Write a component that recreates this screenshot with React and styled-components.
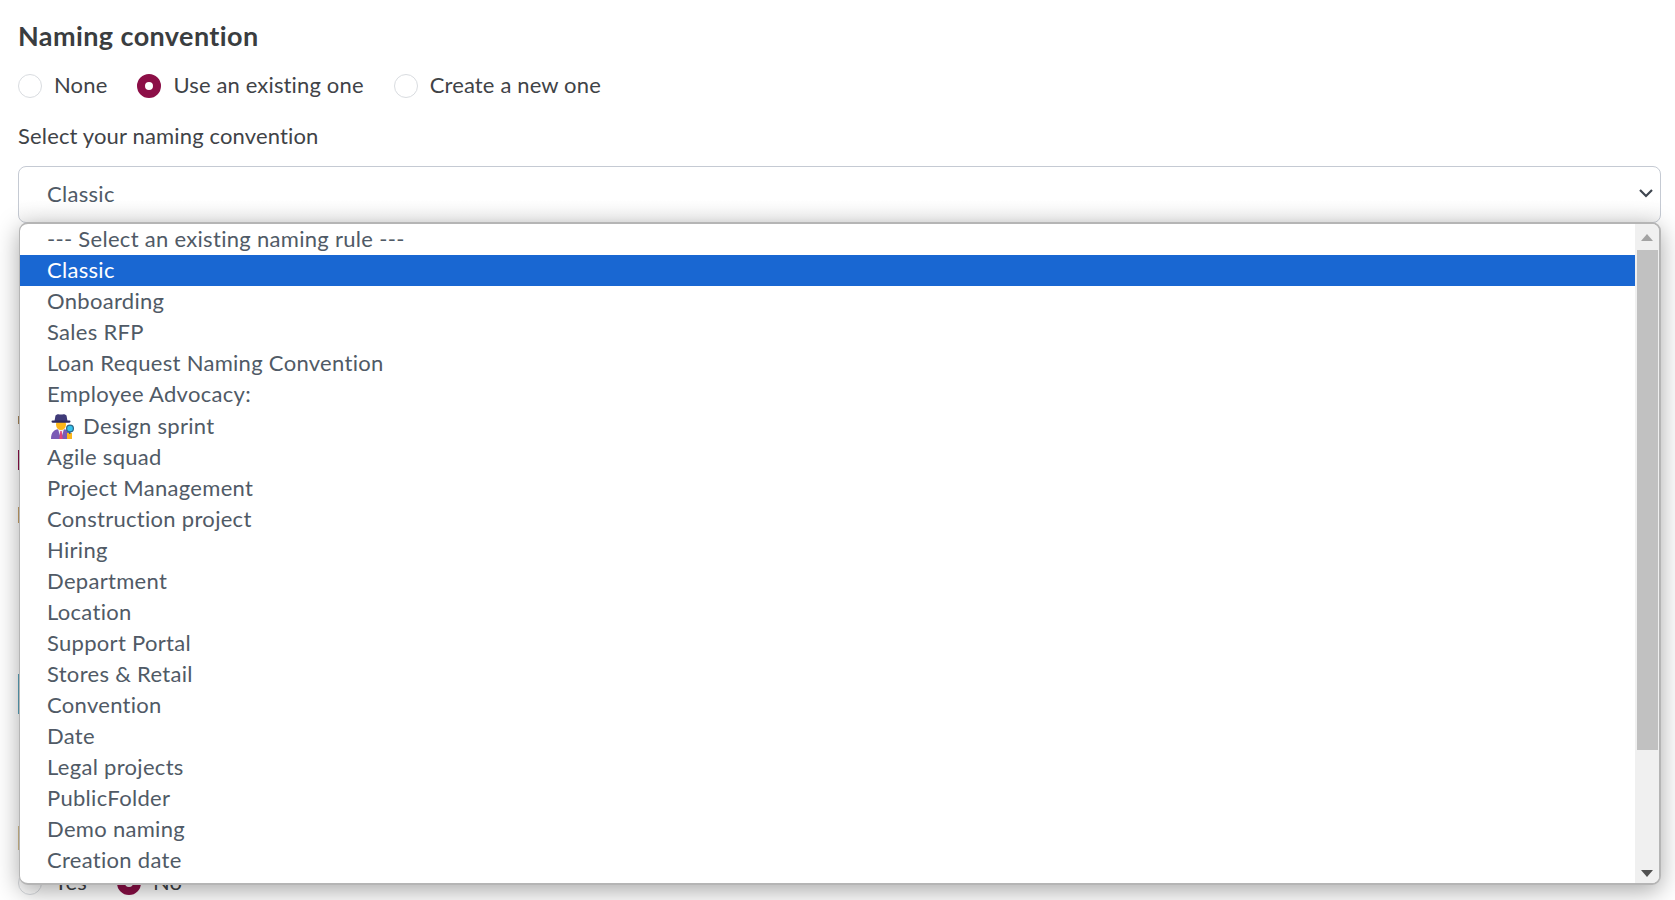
import React from "react";
import styled, { createGlobalStyle } from "styled-components";

const GlobalStyle = createGlobalStyle`
    html, body {
        margin: 0;
        padding: 0;
        background: #fff;
        overflow: hidden;
    }
    body {
        font-family: "Lato", "Noto Sans", sans-serif;
        color: #3f4347;
    }
`;

const OPTIONS = [
    "--- Select an existing naming rule ---",
    "Classic",
    "Onboarding",
    "Sales RFP",
    "Loan Request Naming Convention",
    "Employee Advocacy:",
    "Design sprint",
    "Agile squad",
    "Project Management",
    "Construction project",
    "Hiring",
    "Department",
    "Location",
    "Support Portal",
    "Stores & Retail",
    "Convention",
    "Date",
    "Legal projects",
    "PublicFolder",
    "Demo naming",
    "Creation date",
];

// bits of the form under the open list, only their left edge shows
const HIDDEN_MARKS = [
    { top: 193, height: 8, color: "#a8875a" },
    { top: 26, height: 20, color: "#8c0f47" },
    { top: 37, height: 16, color: "#c9a36a" },
    { top: 151, height: 40, color: "#5ba5bd" },
    { top: 112, height: 24, color: "#d6bf8e" },
];

const Page = styled.div`
    width: 1675px;
    height: 900px;
    padding: 18px 14px 0 18px;
    box-sizing: border-box;
    overflow: hidden;
`;

const Title = styled.h2`
    margin: 0;
    font-size: 27px;
    line-height: 36px;
    font-weight: 700;
    letter-spacing: 0.4px;
    color: #3a3d40;
`;

const RadioRow = styled.div`
    display: flex;
    align-items: center;
    gap: 30px;
    height: 24px;
    margin-top: ${(p) => p.$top || 0}px;
`;

const RadioItem = styled.label`
    display: flex;
    align-items: center;
    gap: 12px;
    font-size: 22px;
    letter-spacing: 0.15px;
    color: #3f4347;
`;

const RadioText = styled.span`
    margin-top: -3px;
`;

const RadioDot = styled.span`
    width: 24px;
    height: 24px;
    box-sizing: border-box;
    border-radius: 50%;
    background: #fff;
    border: ${(p) => (p.$on ? "8px solid #8c0f47" : "1px solid #d9dce0")};
`;

const FieldLabel = styled.div`
    margin-top: 23px;
    font-size: 22px;
    line-height: 30px;
    letter-spacing: 0.15px;
    color: #3f4347;
`;

const SelectWrap = styled.div`
    position: relative;
    margin-top: 15px;
`;

const SelectBox = styled.div`
    height: 57px;
    box-sizing: border-box;
    display: flex;
    align-items: center;
    justify-content: space-between;
    padding: 0 6px 3px 28px;
    border: 1px solid #c5cad3;
    border-radius: 8px;
    background: linear-gradient(#fff 60%, #f6f6f6);
    font-size: 22px;
    letter-spacing: 0.3px;
    color: #505a66;
`;

const Dropdown = styled.div`
    position: absolute;
    left: 1px;
    right: 0;
    top: 56px;
    height: 663px;
    box-sizing: border-box;
    display: flex;
    background: #fff;
    border: 2px solid #b5b5b5;
    border-left-width: 1px;
    border-radius: 9px;
    overflow: hidden;
    box-shadow: 0 6px 24px rgba(0, 0, 0, 0.34);
    z-index: 2;
`;

const OptionList = styled.ul`
    flex: 1;
    margin: 0;
    padding: 0;
    list-style: none;
`;

const Option = styled.li`
    height: ${(p) => (p.$tall ? 32 : 31)}px;
    box-sizing: border-box;
    display: flex;
    align-items: center;
    gap: 8px;
    padding: 0 0 2px 27px;
    font-size: 22px;
    letter-spacing: 0.3px;
    color: ${(p) => (p.$active ? "#fff" : "#505a66")};
    background: ${(p) => (p.$active ? "#1967d2" : "transparent")};
`;

const ScrollBar = styled.div`
    width: 24px;
    display: flex;
    flex-direction: column;
    align-items: center;
    background: #f0f0f0;
`;

const ScrollArrow = styled.span`
    height: ${(p) => p.$height}px;
    flex: none;
    display: flex;
    align-items: center;
    justify-content: center;
`;

const ScrollThumb = styled.div`
    width: 21px;
    height: 500px;
    flex: none;
    background: #c1c1c1;
`;

const ScrollGap = styled.div`
    flex: 1;
`;

const Hidden = styled.div`
    height: 600px;
    display: flex;
    flex-direction: column;
`;

const HiddenMark = styled.div`
    width: 2px;
    flex: none;
    height: ${(p) => p.$height}px;
    margin-top: ${(p) => p.$top}px;
    background: ${(p) => p.$color};
`;

const EmojiIcon = styled.svg`
    margin: 2px 0 0 3px;
    flex: none;
`;

const Caret = () => (
    <svg width="16" height="10" viewBox="0 0 16 10" fill="none">
        <path d="M2 2l6 6 6-6" stroke="#3f4650" strokeWidth="2.2" />
    </svg>
);

const Arrow = ({ up, color }) => (
    <svg width="12" height="7" viewBox="0 0 12 7">
        <path d={up ? "M0 7L6 0l6 7z" : "M0 0l6 7 6-7z"} fill={color} />
    </svg>
);

const Sleuth = () => (
    <EmojiIcon width="25" height="26" viewBox="0 0 25 26">
        <path d="M1 26c0-7 3-10 10-10s10 3 10 10z" fill="#7a5bb5" />
        <path d="M8 16l3 10 3-10z" fill="#f2f2f2" />
        <path d="M10.3 18h1.4l1 8h-3.4z" fill="#e0457b" />
        <ellipse cx="11" cy="11.5" rx="5" ry="5.5" fill="#fcb61b" />
        <path d="M5.5 2.5C7.5.5 9.5 1.5 11 1.5s3.5-1 5.5 1L17.5 8h-13z" fill="#3f3a78" />
        <rect x="1.5" y="7.5" width="19" height="2.2" rx="1.1" fill="#2f2a60" />
        <rect x="17" y="20" width="5" height="6" fill="#fcb61b" />
        <rect x="19" y="18" width="1.5" height="3" fill="#35607a" />
        <circle cx="20" cy="15.5" r="3.4" fill="#35c3ee" stroke="#2c6a8a" strokeWidth="1.3" />
    </EmojiIcon>
);

const Radio = ({ on, children }) => (
    <RadioItem>
        <RadioDot $on={on} />
        <RadioText>{children}</RadioText>
    </RadioItem>
);

const App = () => (
    <Page>
        <GlobalStyle />
        <Title>Naming convention</Title>
        <RadioRow $top={20}>
            <Radio>None</Radio>
            <Radio on>Use an existing one</Radio>
            <Radio>Create a new one</Radio>
        </RadioRow>
        <FieldLabel>Select your naming convention</FieldLabel>
        <SelectWrap>
            <SelectBox>
                Classic
                <Caret />
            </SelectBox>
            <Dropdown>
                <OptionList>
                    {OPTIONS.map((item) => (
                        <Option key={item} $active={item === "Classic"} $tall={item === "Design sprint"}>
                            {item === "Design sprint" && <Sleuth />}
                            {item}
                        </Option>
                    ))}
                </OptionList>
                <ScrollBar>
                    <ScrollArrow $height={26}><Arrow up color="#a3a3a3" /></ScrollArrow>
                    <ScrollThumb />
                    <ScrollGap />
                    <ScrollArrow $height={20}><Arrow color="#505050" /></ScrollArrow>
                </ScrollBar>
            </Dropdown>
            <Hidden>
                {HIDDEN_MARKS.map((mark) => (
                    <HiddenMark key={mark.color} $top={mark.top} $height={mark.height} $color={mark.color} />
                ))}
            </Hidden>
        </SelectWrap>
        <RadioRow $top={48}>
            <Radio>Yes</Radio>
            <Radio on>No</Radio>
        </RadioRow>
    </Page>
);

export default App;
